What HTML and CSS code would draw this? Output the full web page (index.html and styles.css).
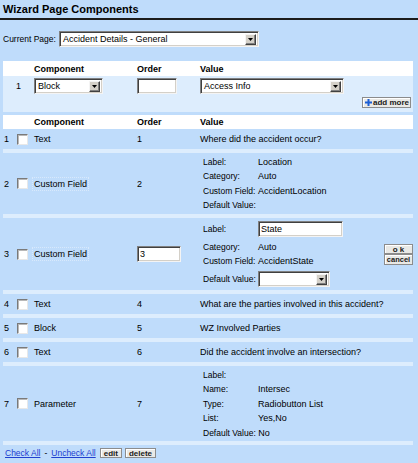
FILE: index.html
```html
<!DOCTYPE html>
<html>
<head>
<meta charset="utf-8">
<link rel="stylesheet" href="styles.css">
</head>
<body>
<h1 class="title">Wizard Page Components</h1>

<div class="current">
  <span class="current-label">Current Page:</span>
  <span class="sel w-page"><span class="sel-text">Accident Details - General</span><span class="sel-btn"><svg width="5" height="3" viewBox="0 0 5 3"><polygon points="0,0 5,0 2.5,3" fill="#000"/></svg></span></span>
</div>

<div class="addbox">
  <div class="add-grid add-head">
    <span></span><span>Component</span><span>Order</span><span>Value</span>
  </div>
  <div class="add-body">
    <div class="add-grid add-row">
      <span class="add-num">1</span>
      <span class="sel w-block"><span class="sel-text">Block</span><span class="sel-btn"><svg width="5" height="3" viewBox="0 0 5 3"><polygon points="0,0 5,0 2.5,3" fill="#000"/></svg></span></span>
      <input class="inp w-order" type="text" value="">
      <span class="sel w-value"><span class="sel-text">Access Info</span><span class="sel-btn"><svg width="5" height="3" viewBox="0 0 5 3"><polygon points="0,0 5,0 2.5,3" fill="#000"/></svg></span></span>
    </div>
    <div class="add-actions">
      <button class="btn btn-add"><svg class="plus" width="7" height="7" viewBox="0 0 7 7"><rect x="2.5" y="0" width="2" height="7" fill="#1c5fd4"/><rect x="0" y="2.5" width="7" height="2" fill="#1c5fd4"/></svg>add more</button>
    </div>
  </div>
</div>

<div class="list">
  <div class="list-grid list-head">
    <span></span><span></span><span>Component</span><span>Order</span><span>Value</span><span></span>
  </div>

  <div class="list-grid list-row r-simple">
    <span class="num">1</span><span class="cb"></span><span>Text</span><span>1</span><span>Where did the accident occur?</span><span></span>
  </div>

  <div class="list-grid list-row r-field">
    <span class="num">2</span><span class="cb"></span><span><span class="dotted">Custom Field</span></span><span>2</span>
    <div class="kv kv-4">
      <span class="k">Label:</span><span>Location</span>
      <span class="k">Category:</span><span>Auto</span>
      <span class="k">Custom Field:</span><span>AccidentLocation</span>
      <span class="k">Default Value:</span><span></span>
    </div>
    <span></span>
  </div>

  <div class="list-grid list-row r-edit">
    <span class="num">3</span><span class="cb"></span><span><span class="dotted">Custom Field</span></span>
    <span><input class="inp w-order2" type="text" value="3"></span>
    <div class="kv kv-edit">
      <span class="k">Label:</span><span><input class="inp w-label" type="text" value="State"></span>
      <span class="k">Category:</span><span>Auto</span>
      <span class="k">Custom Field:</span><span>AccidentState</span>
      <span class="k">Default Value:</span><span><span class="sel w-def"><span class="sel-text"></span><span class="sel-btn"><svg width="5" height="3" viewBox="0 0 5 3"><polygon points="0,0 5,0 2.5,3" fill="#000"/></svg></span></span></span>
    </div>
    <div class="okcancel">
      <button class="btn btn-ok">o k</button>
      <button class="btn btn-cancel">cancel</button>
    </div>
  </div>

  <div class="list-grid list-row r-simple">
    <span class="num">4</span><span class="cb"></span><span>Text</span><span>4</span><span>What are the parties involved in this accident?</span><span></span>
  </div>

  <div class="list-grid list-row r-simple">
    <span class="num">5</span><span class="cb"></span><span>Block</span><span>5</span><span>WZ Involved Parties</span><span></span>
  </div>

  <div class="list-grid list-row r-simple">
    <span class="num">6</span><span class="cb"></span><span>Text</span><span>6</span><span>Did the accident involve an intersection?</span><span></span>
  </div>

  <div class="list-grid list-row r-param">
    <span class="num">7</span><span class="cb"></span><span>Parameter</span><span>7</span>
    <div class="kv kv-5">
      <span class="k">Label:</span><span></span>
      <span class="k">Name:</span><span>Intersec</span>
      <span class="k">Type:</span><span>Radiobutton List</span>
      <span class="k">List:</span><span>Yes,No</span>
      <span class="span2"><span class="k">Default Value:</span> No</span>
    </div>
    <span></span>
  </div>
</div>

<div class="footer">
  <a href="#" class="link">Check All</a><span class="dash">-</span><a href="#" class="link">Uncheck All</a>
  <button class="btn btn-foot btn-edit">edit</button>
  <button class="btn btn-foot">delete</button>
</div>
</body>
</html>
```

FILE: styles.css
```css
html, body {
  margin: 0;
  padding: 0;
}
body {
  background: #bfdcfb;
  font-family: "Liberation Sans", Arial, sans-serif;
  font-size: 9px;
  color: #000;
  width: 418px;
  height: 463px;
  overflow: hidden;
  white-space: nowrap;
}

.title {
  margin: 0;
  padding: 3px 3px 0;
  height: 15px;
  font-size: 11px;
  line-height: 12px;
  font-weight: bold;
  border-bottom: 2px solid #1c1c1c;
}

.current {
  display: flex;
  align-items: center;
  margin: 11px 0 0 3px;
}
.current-label {
  width: 56px;
  font-size: 8.5px;
}

/* fake select */
.sel {
  display: inline-flex;
  align-items: center;
  justify-content: space-between;
  box-sizing: border-box;
  height: 16px;
  background: #fff;
  border: 1px solid;
  border-color: #808080 #f4f4f4 #f4f4f4 #808080;
  box-shadow: inset 1px 1px 0 #404040, inset -1px -1px 0 #d4d0c8;
  padding: 0 2px 0 3px;
}
.sel-btn {
  display: flex;
  align-items: center;
  justify-content: center;
  box-sizing: border-box;
  width: 11px;
  height: 11px;
  background: #d4d0c8;
  border: 1px solid;
  border-color: #f4f4f4 #404040 #404040 #f4f4f4;
  box-shadow: inset -1px -1px 0 #808080;
}
.w-page { width: 200px; }
.w-block { width: 69px; }
.w-value { width: 144px; }
.w-def { width: 72px; }

.inp {
  box-sizing: border-box;
  height: 16px;
  margin: 0;
  padding: 0 2px;
  font: inherit;
  line-height: 14px;
  color: #000;
  background: #fff;
  border: 1px solid;
  border-color: #808080 #f4f4f4 #f4f4f4 #808080;
  box-shadow: inset 1px 1px 0 #404040, inset -1px -1px 0 #d4d0c8;
  outline: none;
  display: block;
}
.w-order { width: 40px; }
.w-order2 { width: 44px; }
.w-label { width: 85px; }

/* add box */
.addbox {
  margin: 14px 0 0 3px;
  width: 410px;
}
.add-grid {
  display: grid;
  grid-template-columns: 31px 103px 63px 1fr;
  align-items: center;
}
.add-head {
  height: 15px;
  background: #fff;
  font-weight: bold;
}
.add-body {
  background: #ddedfd;
  padding: 2px 0 4px;
}
.add-row {
  height: 16px;
}
.add-num {
  text-align: center;
}
.add-actions {
  display: flex;
  justify-content: flex-end;
  margin-top: 3px;
  padding-right: 2px;
}

/* buttons */
.btn {
  box-sizing: border-box;
  margin: 0;
  font-family: "Liberation Sans", Arial, sans-serif;
  font-weight: bold;
  font-size: 8px;
  line-height: 9px;
  color: #1a1a1a;
  background: #e9e9e6;
  border: 1px solid #8c8c8c;
  box-shadow: inset 1px 1px 0 #fff;
  padding: 0 3px;
  cursor: default;
  white-space: nowrap;
}
.btn-add {
  display: flex;
  align-items: center;
  height: 11px;
  padding: 0 1px 0 2px;
  gap: 1px;
}
.plus {
  display: block;
  flex: none;
}
.okcancel {
  display: flex;
  flex-direction: column;
  width: 29px;
  margin-left: 1px;
}
.btn-ok {
  height: 10px;
  padding: 0;
  width: 100%;
}
.btn-cancel {
  height: 11px;
  padding: 0;
  width: 100%;
  font-size: 7.5px;
}

/* list */
.list {
  margin: 3px 0 0 3px;
  width: 410px;
}
.list-grid {
  display: grid;
  grid-template-columns: 12px 19px 103px 63px 183px 30px;
  align-items: center;
}
.list-head {
  height: 14px;
  background: #fff;
  font-weight: bold;
}
.list-row {
  box-sizing: border-box;
  border-bottom: 4px solid #ddedfd;
}
.r-simple { height: 24px; }
.r-field { height: 65px; }
.r-edit { height: 76px; }
.r-param { height: 79px; }

.num {
  padding-left: 1px;
}
.cb {
  display: block;
  box-sizing: border-box;
  width: 11px;
  height: 11px;
  margin-left: 2px;
  background: #fff;
  border: 1px solid;
  border-color: #7a7a7a #e8e8e8 #e8e8e8 #7a7a7a;
  box-shadow: inset 1px 1px 0 #b8b8b8;
}
.dotted {
  outline: 1px dotted #d8e9fc;
  outline-offset: 1px;
}

.kv {
  display: grid;
  grid-template-columns: 55px auto;
  align-items: center;
  padding-left: 3px;
}
.k {
  font-size: 8.5px;
}
.kv-4 { grid-template-rows: repeat(4, 14.5px); }
.kv-5 { grid-template-rows: repeat(5, 14.5px); }
.kv-edit { grid-template-rows: 22px 14px 14px 22px; }
.span2 { grid-column: 1 / 3; }

/* footer */
.footer {
  display: flex;
  align-items: center;
  padding: 2px 0 0 5px;
  height: 11px;
}
.link {
  color: #2040d0;
  text-decoration: underline;
  font-size: 8.5px;
}
.dash {
  padding: 0 4px;
  font-size: 8.5px;
}
.btn-foot {
  height: 10px;
  padding: 0 3px;
}
.btn-edit {
  margin: 0 3px 0 4px;
}
```
